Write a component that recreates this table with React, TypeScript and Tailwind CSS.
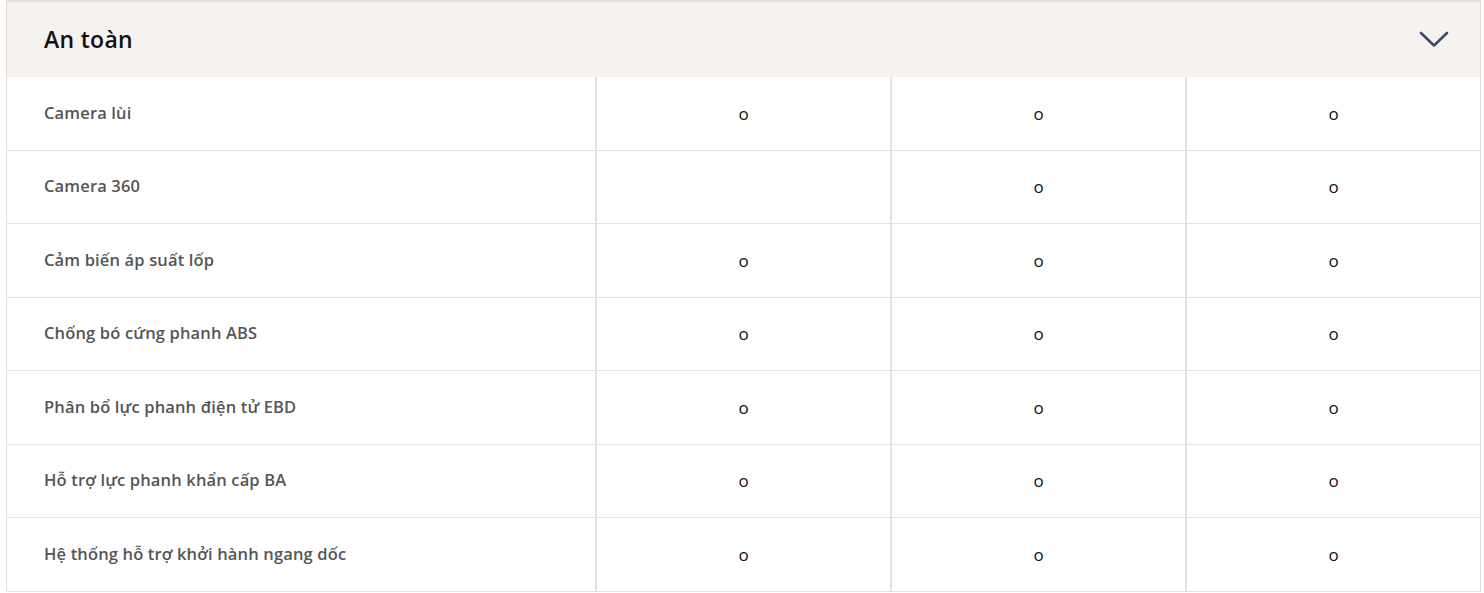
const rows: { name: string; cells: boolean[] }[] = [
  { name: "Camera lùi", cells: [true, true, true] },
  { name: "Camera 360", cells: [false, true, true] },
  { name: "Cảm biến áp suất lốp", cells: [true, true, true] },
  { name: "Chống bó cứng phanh ABS", cells: [true, true, true] },
  { name: "Phân bổ lực phanh điện tử EBD", cells: [true, true, true] },
  { name: "Hỗ trợ lực phanh khẩn cấp BA", cells: [true, true, true] },
  { name: "Hệ thống hỗ trợ khởi hành ngang dốc", cells: [true, true, true] },
];

function ChevronDown() {
  return (
    <svg width="30" height="17" viewBox="0 0 30 17" fill="none">
      <path d="M2 2 L15 14.5 L28 2" stroke="#3b4a6b" strokeWidth="2.6" strokeLinecap="round" strokeLinejoin="round" />
    </svg>
  );
}

export default function App() {
  return (
    <div className="w-[1484px] h-[593px] overflow-hidden bg-white" style={{ fontFamily: "'Open Sans', 'Noto Sans', sans-serif" }}>
      <div className="ml-[6px] w-[1475px] border-l border-r border-[#e2ddd8]">
        <div className="h-[77px] border-t-2 border-[#e6e0da] bg-[#f6f2f0] flex items-center justify-between pl-[37px] pr-[31px]">
          <h2 className="text-[23px] font-semibold text-[#111111] tracking-[0.3px]">An toàn</h2>
          <ChevronDown />
        </div>
        {rows.map((r) => (
          <div key={r.name} className="flex h-[73.5px] border-b border-[#e3e3e3]">
            <div className="w-[588px] flex items-center pl-[37px] text-[16.5px] font-semibold text-[#555555] tracking-[0.15px]">
              {r.name}
            </div>
            {r.cells.map((c, i) => (
              <div key={i} className="w-[295px] border-l-2 border-[#e3e3e3] flex items-center justify-center text-[17px] text-[#111111]">
                {c ? "o" : ""}
              </div>
            ))}
          </div>
        ))}
      </div>
    </div>
  );
}
